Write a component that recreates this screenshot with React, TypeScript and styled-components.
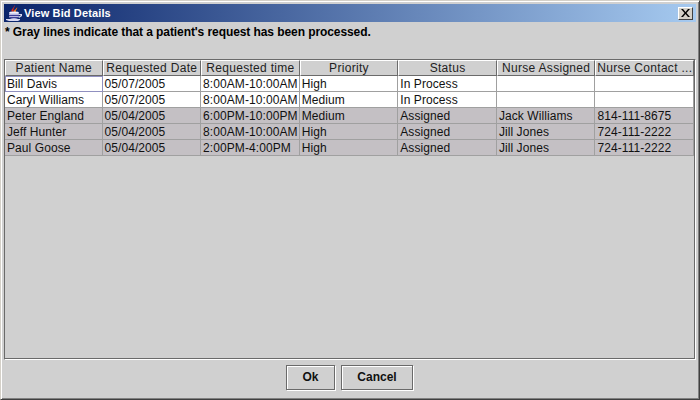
import styled, { createGlobalStyle } from 'styled-components';

const columns = [
  'Patient Name',
  'Requested Date',
  'Requested time',
  'Priority',
  'Status',
  'Nurse Assigned',
  'Nurse Contact ...',
];

const rows = [
  { done: false, cells: ['Bill Davis', '05/07/2005', '8:00AM-10:00AM', 'High', 'In Process', '', ''] },
  { done: false, cells: ['Caryl Williams', '05/07/2005', '8:00AM-10:00AM', 'Medium', 'In Process', '', ''] },
  { done: true, cells: ['Peter England', '05/04/2005', '6:00PM-10:00PM', 'Medium', 'Assigned', 'Jack Williams', '814-111-8675'] },
  { done: true, cells: ['Jeff Hunter', '05/04/2005', '8:00AM-10:00AM', 'High', 'Assigned', 'Jill Jones', '724-111-2222'] },
  { done: true, cells: ['Paul Goose', '05/04/2005', '2:00PM-4:00PM', 'High', 'Assigned', 'Jill Jones', '724-111-2222'] },
];

const App = () => (
  <>
    <GlobalStyle />
    <Frame>
      <TitleBar>
        <JavaIcon width="17" height="17" viewBox="0 0 17 17">
          <path d="M8 0 C10 2 6 4 8 6 L6 7 C4 4 9 3 8 0 Z" fill="#e02818" />
          <path d="M11 2 C12 4 9 5 10 7 L8 7 C7 5 11 4 11 2 Z" fill="#f07818" />
          <ellipse cx="8" cy="8" rx="5" ry="1.4" fill="#f0f0ff" />
          <path d="M3 8.5 H13 V11 C13 13 11 14 8 14 C5 14 3 13 3 11 Z" fill="#b8b8e0" />
          <path d="M3 10 H13 V11 H3 Z M4 12 H12 V13 H4 Z" fill="#3c3c98" />
          <path d="M13 9 H16 V11 L13 13 V11.5 L15 10 H13 Z" fill="#d8d8f0" />
          <path d="M0 14 H14 V15 L12 16 H3 L0 15 Z" fill="#d8d8f0" />
        </JavaIcon>
        <TitleText>View Bid Details</TitleText>
        <CloseButton>
          <svg width="9" height="8" viewBox="0 0 9 8">
            <path d="M0 0 H2 L4.5 3 L7 0 H9 L5.5 4 L9 8 H7 L4.5 5 L2 8 H0 L3.5 4 Z" fill="#000000" />
          </svg>
        </CloseButton>
      </TitleBar>
      <Note>* Gray lines indicate that a patient's request has been processed.</Note>
      <ScrollPane>
        <Table>
          <HeaderRow>
            {columns.map(column => (
              <HeaderCell key={column}>{column}</HeaderCell>
            ))}
          </HeaderRow>
          {rows.map((row, rowIndex) => (
            <Row key={row.cells[0]} $done={row.done}>
              {row.cells.map((cell, cellIndex) => (
                <Cell key={cellIndex} $focused={rowIndex === 0 && cellIndex === 0}>
                  {cell}
                </Cell>
              ))}
            </Row>
          ))}
        </Table>
      </ScrollPane>
      <Buttons>
        <Button $width={49}>Ok</Button>
        <Button $width={72}>Cancel</Button>
      </Buttons>
    </Frame>
  </>
);

const GlobalStyle = createGlobalStyle`
  html, body {
    margin: 0;
    padding: 0;
    background: #d0d0d0;
  }
`;

const Frame = styled.div`
  box-sizing: border-box;
  width: 700px;
  height: 400px;
  display: flex;
  flex-direction: column;
  padding: 3px;
  background: #d0d0d0;
  border-style: solid;
  border-width: 1px;
  border-color: #d4d0c8 #404040 #404040 #d4d0c8;
  box-shadow: inset 1px 1px 0 #ffffff, inset -1px -1px 0 #808080;
  font-family: 'Liberation Sans', Arial, sans-serif;
`;

const TitleBar = styled.div`
  height: 18px;
  flex: none;
  display: flex;
  align-items: center;
  padding: 0 3px 0 2px;
  background: linear-gradient(90deg, #0a246a, #a6caf0);
`;

const JavaIcon = styled.svg`
  flex: none;
  margin-right: 1px;
`;

const TitleText = styled.span`
  flex: 1;
  color: #ffffff;
  font-size: 11px;
  font-weight: bold;
  letter-spacing: 0.13px;
`;

const CloseButton = styled.div`
  box-sizing: border-box;
  width: 15px;
  height: 13px;
  display: flex;
  align-items: center;
  justify-content: center;
  background: #d4d0c8;
  border-style: solid;
  border-width: 1px;
  border-color: #ffffff #404040 #404040 #ffffff;
`;

const Note = styled.div`
  height: 20px;
  flex: none;
  padding-left: 1px;
  font-size: 12px;
  font-weight: bold;
  line-height: 20px;
  letter-spacing: -0.08px;
  color: #000000;
`;

const ScrollPane = styled.div`
  box-sizing: border-box;
  flex: none;
  height: 301px;
  margin-top: 17px;
  background: #d0d0d0;
  border-style: solid;
  border-width: 1px;
  border-color: #6a6a6a #ffffff #ffffff #6a6a6a;
  box-shadow: inset -1px -1px 0 #6a6a6a;
`;

const Table = styled.div`
  display: flex;
  flex-direction: column;
  width: 689px;
`;

const HeaderRow = styled.div`
  display: grid;
  grid-template-columns: 97.5px repeat(6, 98.6px);
  height: 16px;
`;

const HeaderCell = styled.div`
  box-sizing: border-box;
  background: #d0d0d0;
  border-style: solid;
  border-width: 1px;
  border-color: #ffffff #6a6a6a #6a6a6a #ffffff;
  font-size: 12px;
  line-height: 14px;
  letter-spacing: 0.3px;
  text-align: center;
  white-space: nowrap;
  overflow: hidden;
  color: #222222;
`;

const Row = styled.div<{ $done: boolean }>`
  display: grid;
  grid-template-columns: 97.5px repeat(6, 98.6px);
  height: 16px;
  background: ${props => (props.$done ? '#c4c0c4' : '#ffffff')};
`;

const Cell = styled.div<{ $focused: boolean }>`
  box-sizing: border-box;
  padding-left: ${props => (props.$focused ? '1px' : '2px')};
  border-style: solid;
  border-width: ${props => (props.$focused ? '1px' : '0 1px 1px 0')};
  border-color: ${props => (props.$focused ? '#9090c0' : '#a0a0a0')};
  font-size: 12px;
  line-height: ${props => (props.$focused ? '15px' : '17px')};
  letter-spacing: 0.08px;
  white-space: nowrap;
  overflow: hidden;
  color: #111111;
`;

const Buttons = styled.div`
  flex: 1;
  display: flex;
  align-items: center;
  justify-content: center;
  gap: 6px;
  padding: 0 1px 2px 0;
`;

const Button = styled.div<{ $width: number }>`
  box-sizing: border-box;
  width: ${props => props.$width}px;
  height: 25px;
  display: flex;
  align-items: center;
  justify-content: center;
  border: 1px solid #6a6a6a;
  box-shadow: 1px 1px 0 #ffffff, inset 1px 1px 0 #ffffff;
  font-size: 12px;
  font-weight: bold;
  color: #111111;
`;

export default App;
